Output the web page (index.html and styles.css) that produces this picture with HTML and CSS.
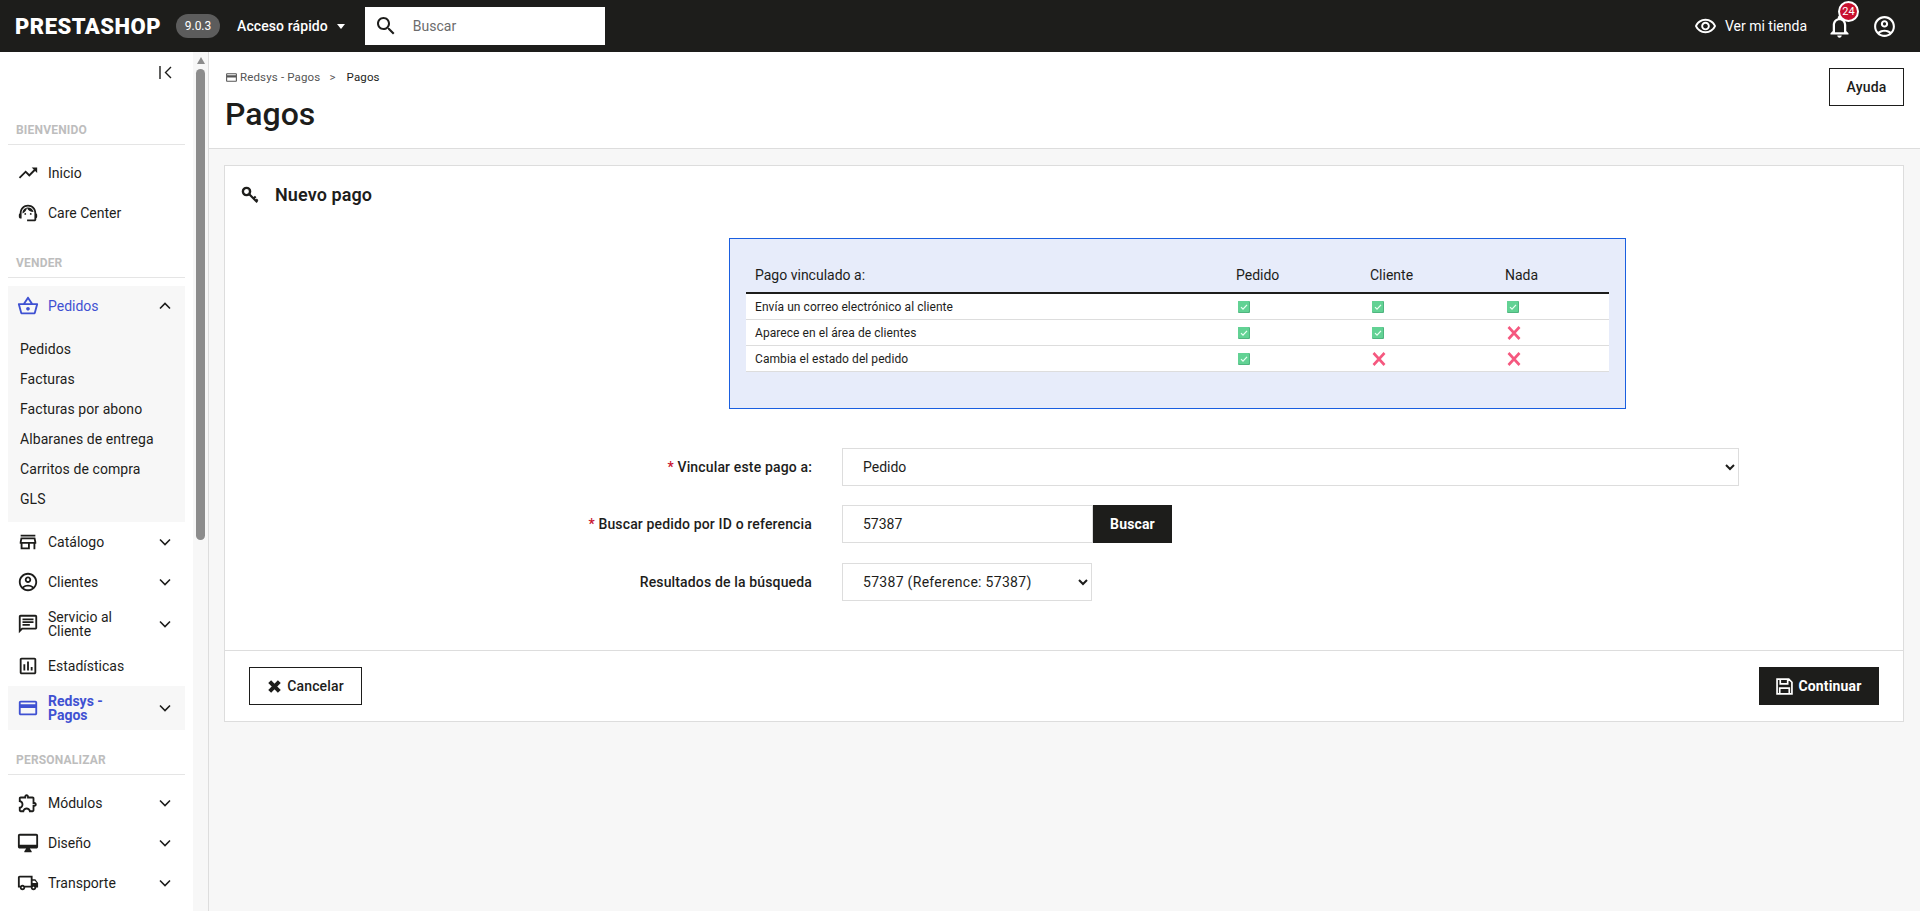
FILE: index.html
```html
<!DOCTYPE html>
<html lang="es">
<head>
  <meta charset="utf-8">
  <title>Pagos - PrestaShop</title>
  <link rel="stylesheet" href="styles.css">
</head>
<body>
  <svg class="sprite" xmlns="http://www.w3.org/2000/svg">
    <symbol id="chev-down" viewBox="0 0 12 8"><path d="M1 1.5l5 5 5-5" fill="none" stroke="currentColor" stroke-width="1.6"/></symbol>
    <symbol id="chev-up" viewBox="0 0 12 8"><path d="M1 6.5l5-5 5 5" fill="none" stroke="currentColor" stroke-width="1.6"/></symbol>
    <symbol id="ok" viewBox="0 0 12 12"><rect width="12" height="12" rx="1" fill="#4fb57f"/><rect width="11" height="11" rx="1" fill="#62d294"/><path d="M3 6.200l2 2 4-4.400" fill="none" stroke="#eafff3" stroke-width="1.200"/></symbol>
    <symbol id="no" viewBox="0 0 14 14"><path d="M1.500 1l11 12M12.500 1l-11 12" fill="none" stroke="#f5587f" stroke-width="2.600"/></symbol>
  </svg>

  <header class="topbar">
    <div class="logo">PRESTASHOP</div>
    <span class="version">9.0.3</span>
    <div class="quick">Acceso rápido <i class="caret"></i></div>
    <div class="search">
      <svg viewBox="0 0 24 24" width="24" height="24"><path fill="#1d1d1b" d="M15.5 14h-.79l-.28-.27C15.41 12.59 16 11.11 16 9.5 16 5.91 13.09 3 9.5 3S3 5.91 3 9.5 5.91 16 9.5 16c1.61 0 3.09-.59 4.23-1.57l.27.28v.79l5 4.99L20.49 19l-4.99-5zm-6 0C7.01 14 5 11.99 5 9.5S7.01 5 9.5 5 14 7.01 14 9.5 11.99 14 9.5 14z"/></svg>
      <input type="text" placeholder="Buscar">
    </div>
    <div class="topbar-right">
      <svg viewBox="0 0 24 24" width="23" height="23"><path fill="#fff" d="M12 6c3.79 0 7.17 2.13 8.82 5.5C19.17 14.87 15.79 17 12 17s-7.17-2.13-8.82-5.5C4.83 8.13 8.21 6 12 6m0-2C7 4 2.73 7.11 1 11.5 2.73 15.89 7 19 12 19s9.27-3.11 11-7.5C21.27 7.11 17 4 12 4zm0 5c1.38 0 2.5 1.12 2.5 2.5S13.38 14 12 14s-2.5-1.12-2.5-2.5S10.62 9 12 9m0-2c-2.48 0-4.5 2.02-4.5 4.5S9.52 16 12 16s4.5-2.02 4.5-4.5S14.48 7 12 7z"/></svg>
      <span class="shop-link">Ver mi tienda</span>
      <div class="bell">
        <svg viewBox="0 0 24 24" width="27" height="27"><path fill="#fff" d="M12 22c1.1 0 2-.9 2-2h-4c0 1.1.9 2 2 2zm6-6v-5c0-3.07-1.63-5.64-4.5-6.32V4c0-.83-.67-1.5-1.5-1.5s-1.5.67-1.5 1.5v.68C7.64 5.36 6 7.92 6 11v5l-2 2v1h16v-1l-2-2zm-2 1H8v-6c0-2.48 1.51-4.5 4-4.5s4 2.02 4 4.5v6z"/></svg>
        <span class="bell-count">24</span>
      </div>
      <svg viewBox="0 0 24 24" width="25" height="25"><path fill="#fff" d="M12 2C6.48 2 2 6.48 2 12s4.48 10 10 10 10-4.48 10-10S17.52 2 12 2zM7.35 18.5C8.66 17.56 10.26 17 12 17s3.34.56 4.65 1.5c-1.31.94-2.91 1.5-4.65 1.5s-3.34-.56-4.65-1.5zm10.79-1.38C16.45 15.8 14.32 15 12 15s-4.45.8-6.14 2.12C4.7 15.73 4 13.95 4 12c0-4.42 3.58-8 8-8s8 3.58 8 8c0 1.95-.7 3.73-1.86 5.12zM12 6c-1.93 0-3.5 1.57-3.5 3.5S10.07 13 12 13s3.5-1.57 3.5-3.5S13.93 6 12 6zm0 5c-.83 0-1.5-.67-1.5-1.5S11.17 8 12 8s1.5.67 1.5 1.5S12.83 11 12 11z"/></svg>
    </div>
  </header>

  <div class="layout">
    <aside class="sidebar">
      <nav class="nav">
        <div class="collapse">
          <svg viewBox="0 0 13 13" width="13" height="13"><path d="M1 0v13M12 1L6.500 6.500 12 12" fill="none" stroke="#1d1d1b" stroke-width="1.400"/></svg>
        </div>

        <div class="nav-title">Bienvenido</div>
        <a class="nav-item">
          <svg viewBox="0 0 24 24"><path d="M16 6l2.29 2.29-4.88 4.88-4-4L2 16.59 3.41 18l6-6 4 4 6.3-6.29L22 12V6z"/></svg>
          <span class="nav-text">Inicio</span>
        </a>
        <a class="nav-item">
          <svg viewBox="0 0 24 24"><path d="M21 12.22C21 6.73 16.74 3 12 3c-4.69 0-9 3.65-9 9.28-.6.34-1 .98-1 1.72v2c0 1.1.9 2 2 2h1v-6.1c0-3.87 3.13-7 7-7s7 3.13 7 7V19h-8v2h8c1.1 0 2-.9 2-2v-1.22c.59-.31 1-.92 1-1.62v-2.3c0-.7-.41-1.31-1-1.64z"/><circle cx="9" cy="13" r="1"/><circle cx="15" cy="13" r="1"/><path d="M18 11.03C17.52 8.18 15.04 6 12.05 6c-3.03 0-6.29 2.51-6.03 6.45 2.47-1.01 4.33-3.21 4.86-5.89 1.31 2.63 4 4.44 7.12 4.47z"/></svg>
          <span class="nav-text">Care Center</span>
        </a>

        <div class="nav-title">Vender</div>
        <div class="nav-group">
          <a class="nav-item active-link">
            <svg viewBox="0 0 24 24"><path d="M22 9h-4.79l-4.38-6.56c-.19-.28-.51-.42-.83-.42s-.64.14-.83.43L6.79 9H2c-.55 0-1 .45-1 1 0 .09.01.18.04.27l2.54 9.27c.23.84 1 1.46 1.92 1.46h13c.92 0 1.69-.62 1.93-1.46l2.54-9.27L23 10c0-.55-.45-1-1-1zM12 4.8L14.8 9H9.2L12 4.8zM18.5 19l-12.99.01L3.31 11H20.7l-2.2 8zM12 13c-1.1 0-2 .9-2 2s.9 2 2 2 2-.9 2-2-.9-2-2-2z"/></svg>
            <span class="nav-text">Pedidos</span>
            <svg class="chev"><use href="#chev-up"/></svg>
          </a>
          <ul class="subnav">
            <li>Pedidos</li>
            <li>Facturas</li>
            <li>Facturas por abono</li>
            <li>Albaranes de entrega</li>
            <li>Carritos de compra</li>
            <li>GLS</li>
          </ul>
        </div>
        <a class="nav-item">
          <svg viewBox="0 0 24 24"><path d="M18.36 9l.6 3H5.04l.6-3h12.72M20 4H4v2h16V4zm0 3H4l-1 5v2h1v6h10v-6h4v6h2v-6h1v-2l-1-5zM6 18v-4h6v4H6z"/></svg>
          <span class="nav-text">Catálogo</span>
          <svg class="chev"><use href="#chev-down"/></svg>
        </a>
        <a class="nav-item">
          <svg viewBox="0 0 24 24"><path d="M12 2C6.48 2 2 6.48 2 12s4.48 10 10 10 10-4.48 10-10S17.52 2 12 2zM7.35 18.5C8.66 17.56 10.26 17 12 17s3.34.56 4.65 1.5c-1.31.94-2.91 1.5-4.65 1.5s-3.34-.56-4.65-1.5zm10.79-1.38C16.45 15.8 14.32 15 12 15s-4.45.8-6.14 2.12C4.7 15.73 4 13.95 4 12c0-4.42 3.58-8 8-8s8 3.58 8 8c0 1.95-.7 3.73-1.86 5.12zM12 6c-1.93 0-3.5 1.57-3.5 3.5S10.07 13 12 13s3.5-1.57 3.5-3.5S13.93 6 12 6zm0 5c-.83 0-1.5-.67-1.5-1.5S11.17 8 12 8s1.5.67 1.5 1.5S12.83 11 12 11z"/></svg>
          <span class="nav-text">Clientes</span>
          <svg class="chev"><use href="#chev-down"/></svg>
        </a>
        <a class="nav-item tall">
          <svg viewBox="0 0 24 24"><path d="M20 2H4c-1.1 0-2 .9-2 2v18l4-4h14c1.1 0 2-.9 2-2V4c0-1.1-.9-2-2-2zm0 14H5.17L4 17.17V4h16v12z"/><path d="M6 12h8v2H6zm0-3h12v2H6zm0-3h12v2H6z"/></svg>
          <span class="nav-text">Servicio al Cliente</span>
          <svg class="chev"><use href="#chev-down"/></svg>
        </a>
        <a class="nav-item">
          <svg viewBox="0 0 24 24"><path d="M19 3H5c-1.1 0-2 .9-2 2v14c0 1.1.9 2 2 2h14c1.1 0 2-.9 2-2V5c0-1.1-.9-2-2-2zm0 16H5V5h14v14z"/><path d="M7 10h2v7H7zm4-3h2v10h-2zm4 6h2v4h-2z"/></svg>
          <span class="nav-text">Estadísticas</span>
        </a>
        <a class="nav-item tall current">
          <svg viewBox="0 0 24 24"><path d="M20 4H4c-1.11 0-1.99.89-1.99 2L2 18c0 1.11.89 2 2 2h16c1.11 0 2-.89 2-2V6c0-1.11-.89-2-2-2zm0 14H4v-6h16v6zm0-10H4V6h16v2z"/></svg>
          <span class="nav-text">Redsys - Pagos</span>
          <svg class="chev"><use href="#chev-down"/></svg>
        </a>

        <div class="nav-title">Personalizar</div>
        <a class="nav-item">
          <svg viewBox="0 0 24 24"><path d="M10.5 4.5c.28 0 .5.22.5.5v2h6v6h2c.28 0 .5.22.5.5s-.22.5-.5.5h-2v6h-2.12c-.68-1.75-2.39-3-4.38-3s-3.7 1.25-4.38 3H4v-2.12c1.75-.68 3-2.39 3-4.38 0-1.99-1.24-3.7-2.99-4.38L4 7h6V5c0-.28.22-.5.5-.5m0-2C9.12 2.5 8 3.62 8 5H4c-1.1 0-1.99.9-1.99 2v3.8h.29c1.49 0 2.7 1.21 2.7 2.7s-1.21 2.7-2.7 2.7H2V20c0 1.1.9 2 2 2h3.8v-.3c0-1.49 1.21-2.7 2.7-2.7s2.7 1.21 2.7 2.7v.3H17c1.1 0 2-.9 2-2v-4c1.38 0 2.5-1.12 2.5-2.5S20.38 11 19 11V7c0-1.1-.9-2-2-2h-4c0-1.38-1.12-2.5-2.5-2.5z"/></svg>
          <span class="nav-text">Módulos</span>
          <svg class="chev"><use href="#chev-down"/></svg>
        </a>
        <a class="nav-item">
          <svg viewBox="0 0 24 24"><path d="M21 2H3c-1.1 0-2 .9-2 2v12c0 1.1.9 2 2 2h7l-2 3v1h8v-1l-2-3h7c1.1 0 2-.9 2-2V4c0-1.1-.9-2-2-2zm0 12H3V4h18v10z"/></svg>
          <span class="nav-text">Diseño</span>
          <svg class="chev"><use href="#chev-down"/></svg>
        </a>
        <a class="nav-item">
          <svg viewBox="0 0 24 24"><path d="M20 8h-3V4H3c-1.1 0-2 .9-2 2v11h2c0 1.66 1.34 3 3 3s3-1.34 3-3h6c0 1.66 1.34 3 3 3s3-1.34 3-3h2v-5l-3-4zm-.5 1.5l1.96 2.5H17V9.5h2.5zM6 18c-.55 0-1-.45-1-1s.45-1 1-1 1 .45 1 1-.45 1-1 1zm2.22-3c-.55-.61-1.33-1-2.22-1s-1.67.39-2.22 1H3V6h12v9H8.22zM18 18c-.55 0-1-.45-1-1s.45-1 1-1 1 .45 1 1-.45 1-1 1z"/></svg>
          <span class="nav-text">Transporte</span>
          <svg class="chev"><use href="#chev-down"/></svg>
        </a>
      </nav>
      <div class="scrollbar">
        <i class="scroll-arrow"></i>
        <div class="scroll-thumb"></div>
      </div>
    </aside>

    <main class="main">
      <div class="page-head">
        <div>
          <div class="breadcrumb">
            <svg viewBox="0 0 24 24" width="13" height="13"><path fill="#555" d="M20 4H4c-1.11 0-1.99.89-1.99 2L2 18c0 1.11.89 2 2 2h16c1.11 0 2-.89 2-2V6c0-1.11-.89-2-2-2zm0 14H4v-6h16v6zm0-10H4V6h16v2z"/></svg>
            <span>Redsys - Pagos</span>
            <span class="crumb-sep">&gt;</span>
            <span class="crumb-last">Pagos</span>
          </div>
          <h1>Pagos</h1>
        </div>
        <a class="btn btn-outline">Ayuda</a>
      </div>

      <section class="card">
        <div class="card-head">
          <svg viewBox="0 0 18 18" width="18" height="18"><circle cx="5.500" cy="5.500" r="3.600" fill="none" stroke="#1d1d1b" stroke-width="2.400"/><path d="M8.300 8.300l8 8M12.500 12.500l2.200-2M15 15l1.600-1.600" fill="none" stroke="#1d1d1b" stroke-width="2.200"/></svg>
          <h2>Nuevo pago</h2>
        </div>

        <div class="info-box">
          <table class="info-table">
            <thead>
              <tr>
                <th class="col-main">Pago vinculado a:</th>
                <th class="col-a">Pedido</th>
                <th class="col-b">Cliente</th>
                <th>Nada</th>
              </tr>
            </thead>
            <tbody>
              <tr>
                <td>Envía un correo electrónico al cliente</td>
                <td><svg class="ico-ok"><use href="#ok"/></svg></td>
                <td><svg class="ico-ok"><use href="#ok"/></svg></td>
                <td><svg class="ico-ok"><use href="#ok"/></svg></td>
              </tr>
              <tr>
                <td>Aparece en el área de clientes</td>
                <td><svg class="ico-ok"><use href="#ok"/></svg></td>
                <td><svg class="ico-ok"><use href="#ok"/></svg></td>
                <td><svg class="ico-no"><use href="#no"/></svg></td>
              </tr>
              <tr>
                <td>Cambia el estado del pedido</td>
                <td><svg class="ico-ok"><use href="#ok"/></svg></td>
                <td><svg class="ico-no"><use href="#no"/></svg></td>
                <td><svg class="ico-no"><use href="#no"/></svg></td>
              </tr>
            </tbody>
          </table>
        </div>

        <form class="form">
          <div class="form-row">
            <label class="form-label"><em>*</em> Vincular este pago a:</label>
            <select class="control control-full">
              <option>Pedido</option>
            </select>
          </div>
          <div class="form-row">
            <label class="form-label"><em>*</em> Buscar pedido por ID o referencia</label>
            <input class="control control-search" type="text" value="57387">
            <a class="btn btn-dark btn-search">Buscar</a>
          </div>
          <div class="form-row">
            <label class="form-label">Resultados de la búsqueda</label>
            <select class="control control-result">
              <option>57387 (Reference: 57387)</option>
            </select>
          </div>
        </form>

        <div class="card-foot">
          <a class="btn btn-outline btn-cancel">
            <svg viewBox="0 0 14 14" width="15" height="15"><path d="M2.500 2.500l9 9M11.500 2.500l-9 9" fill="none" stroke="#1d1d1b" stroke-width="3.800"/></svg>
            Cancelar
          </a>
          <a class="btn btn-dark btn-save">
            <svg viewBox="0 0 16 16" width="17" height="17"><path d="M1 1h11l3 3v11H1zM4 1v4.500h7V1M3.500 15V9.500h9V15" fill="none" stroke="#fff" stroke-width="1.600"/></svg>
            Continuar
          </a>
        </div>
      </section>
    </main>
  </div>
</body>
</html>
```

FILE: styles.css
```css
* {
  box-sizing: border-box;
  margin: 0;
  padding: 0;
}

html, body {
  height: 100%;
  overflow: hidden;
}

body {
  font-family: Roboto, "Liberation Sans", sans-serif;
  font-size: 14px;
  color: #1d1d1b;
  background-color: #f7f7f7;
}

.sprite {
  display: none;
}

/* top bar */
.topbar {
  display: flex;
  align-items: center;
  height: 52px;
  padding: 0 23px 0 15px;
  background-color: #1d1d1b;
  color: #fff;
}

.logo {
  width: 146px;
  font-size: 22px;
  font-weight: 900;
  letter-spacing: 0.5px;
  white-space: nowrap;
}

.version {
  width: 44px;
  height: 24px;
  margin-left: 15px;
  border-radius: 12px;
  background-color: #5c5c5c;
  font-size: 12px;
  line-height: 24px;
  text-align: center;
}

.quick {
  display: flex;
  align-items: center;
  margin-left: 17px;
  font-weight: 500;
  letter-spacing: 0.1px;
}

.caret {
  width: 0;
  height: 0;
  margin-left: 9px;
  border-left: 4.5px solid transparent;
  border-right: 4.5px solid transparent;
  border-top: 5px solid #fff;
}

.search {
  display: flex;
  align-items: center;
  width: 240px;
  height: 38px;
  margin-left: 20px;
  padding-left: 9px;
  background-color: #fff;
}

.search input {
  flex: 1;
  width: 100px;
  margin-left: 15px;
  border: 0;
  outline: 0;
  font: inherit;
  color: #1d1d1b;
}

.search input::placeholder {
  color: #6c6c6c;
}

.topbar-right {
  display: flex;
  align-items: center;
  margin-left: auto;
}

.shop-link {
  margin-left: 8px;
}

.bell {
  position: relative;
  display: flex;
  margin-left: 19px;
  margin-right: 19px;
}

.bell-count {
  position: absolute;
  top: -12px;
  left: 12px;
  width: 21px;
  height: 21px;
  border: 2px solid #fff;
  border-radius: 50%;
  background-color: #c8102e;
  font-size: 11px;
  line-height: 17px;
  text-align: center;
}

/* page layout */
.layout {
  display: flex;
  height: 859px;
}

.sidebar {
  display: flex;
  flex: none;
  width: 209px;
  border-right: 1px solid #ddd;
  background-color: #fff;
}

.nav {
  width: 193px;
  padding: 0 8px;
  overflow: hidden;
}

.collapse {
  display: flex;
  align-items: center;
  justify-content: flex-end;
  height: 40px;
  padding-right: 13px;
}

.nav-title {
  height: 24px;
  margin: 21px 0 8px;
  padding: 2px 8px 0;
  border-bottom: 1px solid #e5e5e5;
  color: #bdbdbd;
  font-size: 12px;
  font-weight: 700;
  letter-spacing: 0.2px;
  text-transform: uppercase;
}

.collapse + .nav-title {
  margin-top: 29px;
}

.nav-item {
  display: flex;
  align-items: center;
  height: 40px;
  padding: 0 14px 0 9px;
  line-height: 14px;
}

.nav-item > svg:first-child {
  flex: none;
  width: 22px;
  height: 22px;
  margin-right: 9px;
  fill: currentColor;
}

.nav-text {
  max-width: 96px;
}

.chev {
  width: 12px;
  height: 8px;
  margin-left: auto;
}

.nav-item.tall {
  height: 44px;
}

.active-link {
  color: #3f51d2;
}

.active-link .chev {
  color: #1d1d1b;
}

.current {
  background-color: #f7f7f7;
  color: #3f51d2;
  font-weight: 700;
}

.current .chev {
  color: #1d1d1b;
}

.nav-group {
  background-color: #f7f7f7;
}

.subnav {
  padding: 8px 0;
  list-style: none;
}

.subnav li {
  height: 30px;
  padding-left: 12px;
  line-height: 30px;
  letter-spacing: 0.08px;
}

/* drawn scrollbar */
.scrollbar {
  display: flex;
  flex: none;
  flex-direction: column;
  align-items: center;
  width: 15px;
  background-color: #f7f7f7;
}

.scroll-arrow {
  width: 0;
  height: 0;
  margin-top: 5px;
  border-left: 4.5px solid transparent;
  border-right: 4.5px solid transparent;
  border-bottom: 7px solid #8c8c8c;
}

.scroll-thumb {
  width: 9px;
  height: 471px;
  margin-top: 5px;
  border-radius: 5px;
  background-color: #8c8c8c;
}

/* main */
.main {
  flex: 1;
  min-width: 0;
}

.page-head {
  display: flex;
  justify-content: space-between;
  align-items: flex-start;
  height: 97px;
  padding: 16px 16px 0;
  border-bottom: 1px solid #ddd;
  background-color: #fff;
}

.breadcrumb {
  display: flex;
  align-items: center;
  height: 18px;
  color: #555;
  font-size: 11.5px;
  letter-spacing: 0.15px;
}

.breadcrumb svg {
  margin-right: 2px;
}

.crumb-sep {
  margin: 0 11px 0 9px;
}

.crumb-last {
  color: #1d1d1b;
}

h1 {
  margin-top: 8px;
  font-size: 32px;
  font-weight: 500;
  line-height: 40px;
}

.btn {
  display: inline-flex;
  align-items: center;
  justify-content: center;
  height: 38px;
  font-weight: 500;
  letter-spacing: 0.15px;
}

.btn-outline {
  border: 1px solid #1d1d1b;
  background-color: #fff;
}

.page-head .btn-outline {
  width: 75px;
}

.btn-dark {
  background-color: #1d1d1b;
  color: #fff;
}

.card {
  margin: 16px 16px 0 15px;
  border: 1px solid #ddd;
  background-color: #fff;
}

.card-head {
  display: flex;
  align-items: center;
  height: 58px;
  padding-left: 16px;
}

.card-head h2 {
  margin: -1px 0 0 16px;
  font-size: 18px;
  font-weight: 600;
  letter-spacing: 0.1px;
}

.info-box {
  width: 897px;
  height: 171px;
  margin: 14px 0 0 504px;
  padding: 16px;
  border: 1px solid #1a5fe0;
  background-color: #e7ecfa;
}

.info-table {
  width: 863px;
  border-collapse: collapse;
  table-layout: fixed;
}

.info-table th {
  height: 38px;
  padding: 2px 0 0 9px;
  border-bottom: 2px solid #1d1d1b;
  font-weight: 400;
  text-align: left;
}

.col-main {
  width: 481px;
}

.col-a {
  width: 134px;
}

.col-b {
  width: 135px;
}

.info-table td {
  height: 26px;
  padding: 2px 0 0 9px;
  border-bottom: 1px solid #ddd;
  background-color: #fff;
  font-size: 12px;
  letter-spacing: 0.07px;
  vertical-align: middle;
}

.ico-ok,
.ico-no {
  display: block;
  margin-left: 2px;
}

.ico-ok {
  width: 12px;
  height: 12px;
}

.ico-no {
  width: 14px;
  height: 14px;
}

.form {
  padding: 39px 0 30px;
}

.form-row {
  display: flex;
  align-items: center;
  margin-bottom: 19px;
}

.form-row:nth-child(2) {
  margin-bottom: 20px;
}

.form-label {
  width: 587px;
  margin-right: 30px;
  font-weight: 500;
  letter-spacing: 0.15px;
  text-align: right;
}

.form-label em {
  color: #c8102e;
  font-style: normal;
}

.control {
  height: 38px;
  border: 1px solid #ddd;
  border-radius: 0;
  outline: 0;
  background-color: #fff;
  color: #1d1d1b;
  font: inherit;
}

select.control {
  padding-left: 16px;
}

.control-full {
  width: 897px;
}

.control-search {
  width: 251px;
  padding-left: 20px;
}

.btn-search {
  width: 79px;
  font-weight: 700;
}

.control-result {
  width: 250px;
  letter-spacing: 0.3px;
}

.card-foot {
  display: flex;
  justify-content: space-between;
  padding: 16px 24px;
  border-top: 1px solid #ddd;
}

.btn-cancel {
  width: 113px;
}

.btn-save {
  width: 120px;
  font-weight: 700;
}

.btn svg {
  margin-right: 5px;
}
```
